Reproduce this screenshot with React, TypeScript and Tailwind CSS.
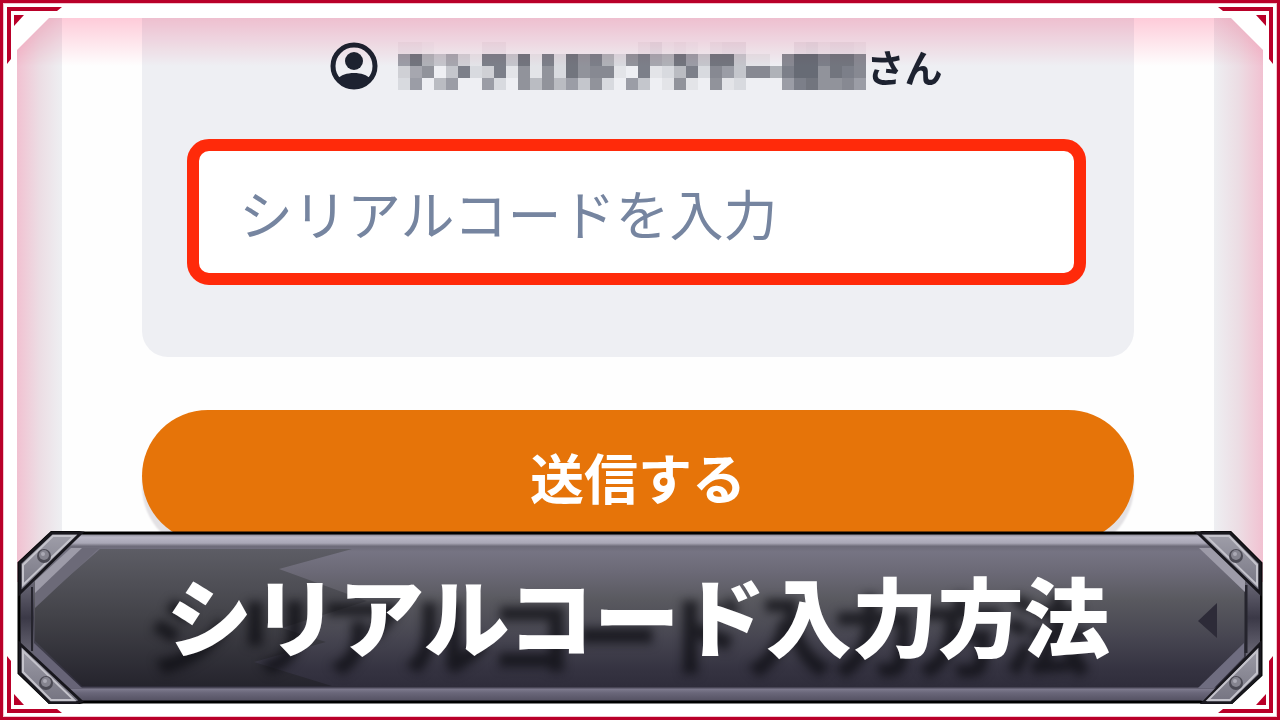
import { useState } from "react";

// Darkness of every mosaic cell, one hex digit each
const mosaicRows = [
  "221000022000000000002412102330000342332",
  "8c64731bb4c1b2c9b629b76c84cc4110addbcca",
  "37904b23b19192c9aa10b125b2a84aa6bdd9cba",
  "28058008209595849208401910912000" + "8bc99a8",
];

const Mosaic = () => (
  <svg className="h-12 w-[468px] shrink-0" viewBox="0 0 468 48" shapeRendering="crispEdges" aria-hidden="true">
    {mosaicRows.map((row, y) =>
      row.split("").map((cell, x) => (
        <rect
          key={`${x}-${y}`}
          x={x * 12}
          y={y * 12}
          width="12"
          height="12"
          fill={y === 0 ? "#40243c" : "#1f2331"}
          opacity={parseInt(cell, 16) * (y === 0 ? 0.02 : 0.05)}
        />
      ))
    )}
  </svg>
);

const UserIcon = () => (
  <svg className="size-12 shrink-0" viewBox="0 0 48 48" aria-hidden="true">
    <circle cx="24" cy="24" r="21" fill="none" stroke="#1d2230" strokeWidth="5" />
    <circle cx="24" cy="19" r="9" fill="#1d2230" />
    <path d="M7 37C11 33 17 31 24 31s13 2 17 6c-4 6-10 10-17 10S11 43 7 37Z" fill="#1d2230" />
  </svg>
);

const Corner = ({ className, cut }: { className: string; cut?: boolean }) => (
  <svg className={`pointer-events-none absolute size-16 ${className}`} viewBox="0 0 64 64" aria-hidden="true">
    {cut && <path d="M4 4H49V18L17 50H4Z" fill="#fff" />}
    <path d="M7 7H62L57 11H11V59L7 64Z" fill="#b90029" />
    <path d="M14 15H24L14 26Z" fill="#b90029" />
  </svg>
);

const Bolt = ({ x, y }: { x: number; y: number }) => (
  <g>
    <circle cx={x} cy={y} r="7" fill="#4b4a54" />
    <circle cx={x} cy={y - 1} r="5" fill="#85848f" />
    <circle cx={x - 1} cy={y - 2} r="2" fill="#aaa9b4" />
  </g>
);

const BannerPlate = () => (
  <svg className="absolute inset-0 size-full" viewBox="0 0 1246 173" preserveAspectRatio="none" aria-hidden="true">
    <defs>
      <linearGradient id="steel" x1="0" y1="0" x2="0" y2="173" gradientUnits="userSpaceOnUse">
        <stop offset="0.02" stopColor="#8a8996" />
        <stop offset="0.035" stopColor="#b9b7c6" />
        <stop offset="0.07" stopColor="#a9a7b6" />
        <stop offset="0.088" stopColor="#6d6b79" />
        <stop offset="0.12" stopColor="#767483" />
        <stop offset="0.24" stopColor="#6b6976" />
        <stop offset="0.4" stopColor="#59595f" />
        <stop offset="0.6" stopColor="#484752" />
        <stop offset="0.8" stopColor="#353341" />
        <stop offset="0.9" stopColor="#2f2d3b" />
        <stop offset="0.915" stopColor="#7c798c" />
        <stop offset="0.935" stopColor="#6a677a" />
        <stop offset="0.98" stopColor="#555263" />
      </linearGradient>
      <linearGradient id="shade" x1="0" y1="0" x2="0" y2="1">
        <stop offset="0" stopColor="#5d5d65" />
        <stop offset="0.5" stopColor="#424248" />
        <stop offset="1" stopColor="#25242d" />
      </linearGradient>
      <linearGradient id="plate" x1="0" y1="0" x2="0" y2="1">
        <stop offset="0" stopColor="#a09faa" />
        <stop offset="1" stopColor="#747380" />
      </linearGradient>
      <linearGradient id="rim" x1="0" y1="0" x2="0" y2="1">
        <stop offset="0" stopColor="#6c6a78" />
        <stop offset="0.5" stopColor="#3b3947" />
        <stop offset="1" stopColor="#6c6a78" />
      </linearGradient>
    </defs>
    <path
      d="M35 1H58L66 2H1183L1187 1H1213L1244 32V144L1214 172H1188L1183 171H66L59 172H33L2 142V32Z"
      fill="url(#steel)"
      stroke="#000"
      strokeWidth="3"
    />
    <path d="M83 18H335L262 38L350 70L265 97L309 111L237 131L315 155H65L18 110V75Z" fill="url(#shade)" />
    <path d="M4 58L17 48V126L4 114Z" fill="url(#rim)" />
    <path d="M15 56V120" stroke="#25242d" strokeWidth="2" />
    <path d="M54 17H82L18 77V52Z" fill="#6c6a78" />
    <path d="M54 17H65L18 62V50Z" fill="#9d9ba8" />
    <path d="M17 112L65 157H50L17 126Z" fill="#676477" />
    <path d="M1243 58L1229 48V126L1243 114Z" fill="url(#rim)" />
    <path d="M1229 54V122" stroke="#25242d" strokeWidth="3" />
    <path d="M1182 17H1194L1228 48V61Z" fill="#9d9ba8" />
    <path d="M1227 112V126L1197 157H1181Z" fill="#6f6d80" />
    <g fill="url(#plate)" stroke="#18171d" strokeWidth="3">
      <path d="M35 2H64L3 62V32Z" />
      <path d="M3 113L64 170L59 172H33L3 142Z" />
      <path d="M1181 2H1213L1243 32V62Z" />
      <path d="M1243 113V144L1214 172H1186Z" />
    </g>
    <g fill="none" stroke="#c4c3cb" strokeWidth="2">
      <path d="M6 54V34L36 5H57Z" />
      <path d="M6 120V141L34 169H57Z" />
      <path d="M1240 54V34L1212 5H1189Z" />
      <path d="M1240 120V142L1213 169H1191Z" />
    </g>
    <Bolt x={27} y={25} />
    <Bolt x={29} y={152} />
    <Bolt x={1219} y={25} />
    <Bolt x={1219} y={152} />
    <path d="M1181 90L1200 72V107Z" fill="#2d2b38" />
  </svg>
);

export default function App() {
  const [code, setCode] = useState("");

  return (
    <div className="relative flex min-h-screen flex-col border-[3px] border-[#b90029] bg-white px-[14px] pt-[15px] pb-[13px] font-['Noto_Sans_CJK_JP',sans-serif] shadow-[inset_0_0_0_1px_#f3c5d0]">
      <main className="relative flex flex-1 overflow-hidden">
        <div className="w-[45px] shrink-0 bg-linear-to-r from-[#f1c1d1] via-[#ecdde4] to-[#eeeff2]" />
        <form className="min-w-0 flex-1 bg-[#fefefe] px-20 pb-10" onSubmit={(e) => e.preventDefault()}>
          <section className="rounded-b-[26px] bg-[#eeeff3] pt-6 pr-12 pb-[72px] pl-[45px]">
            <div className="flex items-center justify-center">
              <UserIcon />
              <div className="ml-5 flex items-center">
                <Mosaic />
                <span className="text-[38px] leading-12 font-bold whitespace-nowrap text-[#1d2230]">さん</span>
              </div>
            </div>
            <input
              type="text"
              aria-label="シリアルコードを入力"
              placeholder="シリアルコードを入力"
              value={code}
              onChange={(e) => setCode(e.target.value)}
              className="mt-[49px] block h-[146px] w-full rounded-[22px] border-12 border-[#ff2a0a] bg-white px-10 text-[54px] text-[#1d2230] outline-none placeholder:text-[#7685a0]"
            />
          </section>
          <button
            type="submit"
            className="mt-[53px] block h-[132px] w-full rounded-full bg-[#e67409] text-[54px] font-bold text-white shadow-[0_10px_2px_#e3e1e4]"
          >
            送信する
          </button>
        </form>
        <div className="w-[49px] shrink-0 bg-linear-to-l from-[#f1c1d1] via-[#ecdde4] to-[#eeeff2]" />
        <div className="pointer-events-none absolute inset-x-0 top-0 h-12 bg-linear-to-b from-[#ffccda] to-white mix-blend-multiply" />
      </main>
      <header className="relative -mt-[51px] flex h-[173px] items-center justify-center pr-1 pb-2">
        <BannerPlate />
        <h1 className="relative text-[86px] leading-none font-black whitespace-nowrap text-white [text-shadow:-20px_18px_10px_rgba(15,15,20,0.75)]">
          シリアルコード入力方法
        </h1>
      </header>
      <Corner className="-top-[3px] -left-[3px]" cut />
      <Corner className="-top-[3px] -right-[3px] -scale-x-100" cut />
      <Corner className="-bottom-[3px] -left-[3px] -scale-y-100" />
      <Corner className="-right-[3px] -bottom-[3px] -scale-100" />
    </div>
  );
}
